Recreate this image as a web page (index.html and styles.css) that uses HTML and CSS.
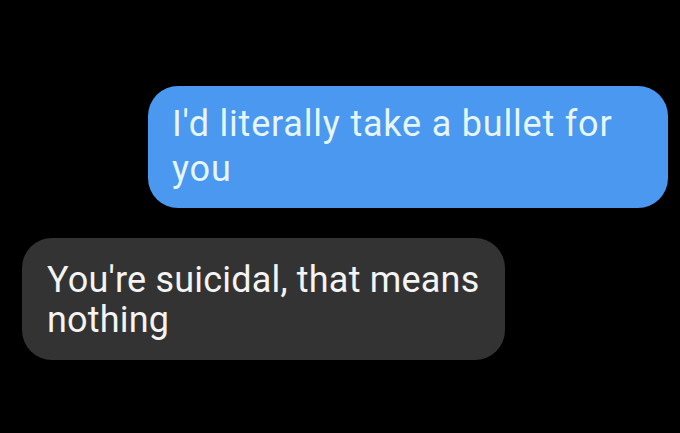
FILE: index.html
```html
<!DOCTYPE html>
<html>
<head>
<meta charset="utf-8">
<link rel="stylesheet" href="styles.css">
</head>
<body>
<div class="chat">
  <div class="bubble sent">I'd literally take a bullet for<br>you</div>
  <div class="bubble received">You're suicidal, that means<br>nothing</div>
</div>
</body>
</html>
```
FILE: styles.css
```css
html, body {
  margin: 0;
  background: #000;
  width: 680px;
  height: 433px;
  overflow: hidden;
}
.chat {
  display: flex;
  flex-direction: column;
  padding-top: 86px;
  gap: 30px;
  font-family: Roboto, "Liberation Sans", sans-serif;
}
.bubble {
  box-sizing: border-box;
  height: 122px;
  border-radius: 30px;
  font-size: 36px;
}
.sent {
  width: 520px;
  margin-left: 148px;
  padding: 16px 24px;
  line-height: 45px;
  letter-spacing: 0.8px;
  background: #4a98f0;
  color: #e6f6f7;
}
.received {
  width: 483px;
  margin-left: 22px;
  padding: 22px 25px;
  line-height: 40px;
  letter-spacing: 0.2px;
  background: #333;
  color: #f4f4f4;
}
```
